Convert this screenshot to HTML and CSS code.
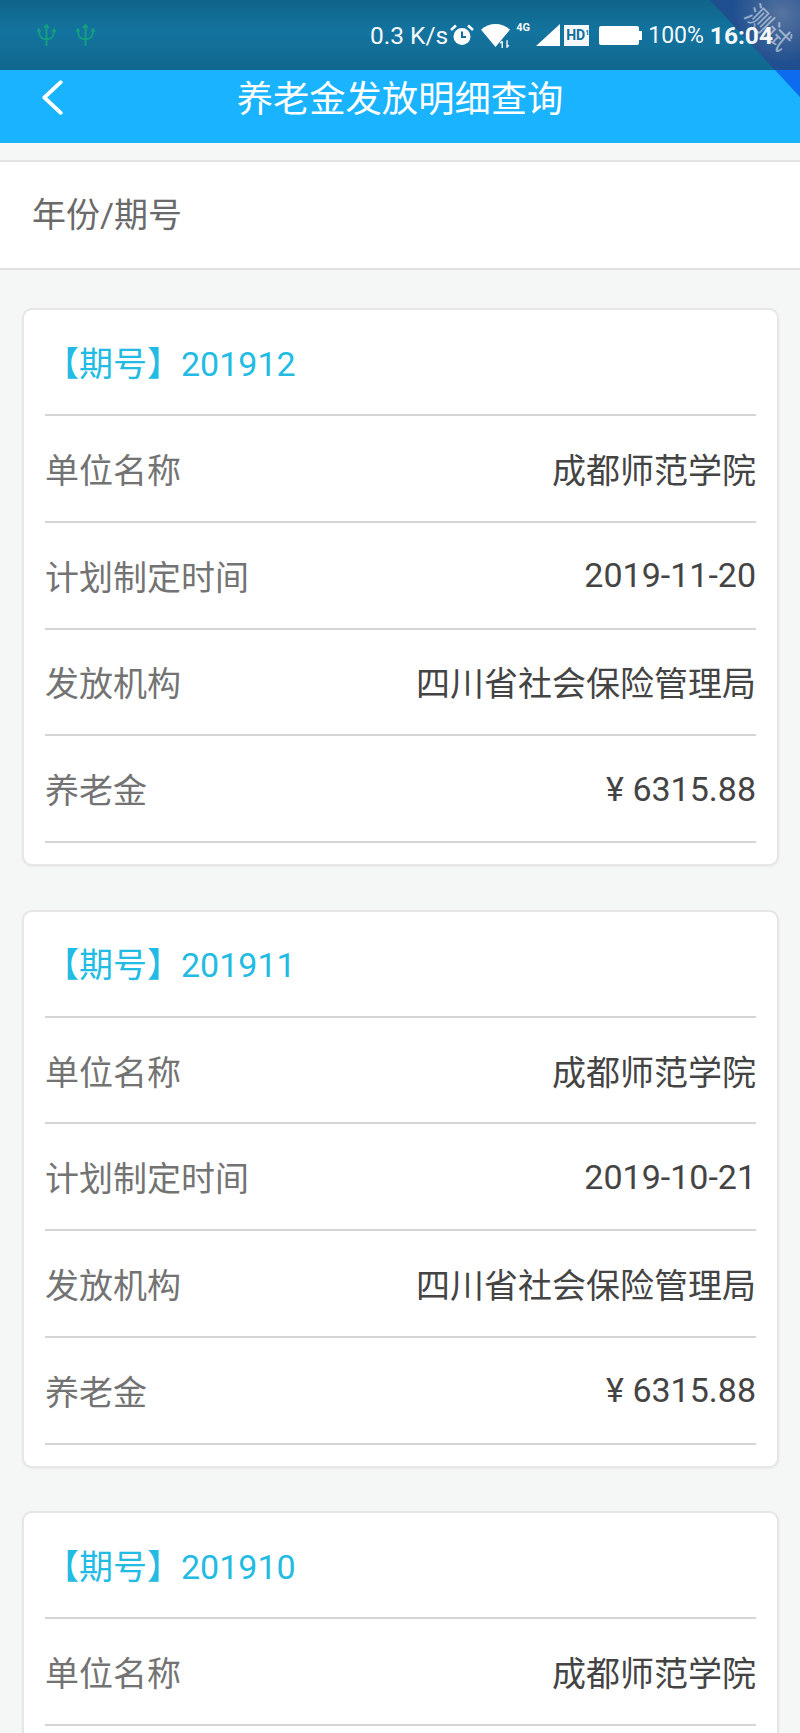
FILE: index.html
```html
<!DOCTYPE html>
<html lang="zh-CN">
<head>
<meta charset="utf-8">
<title>养老金发放明细查询</title>
<link rel="stylesheet" href="styles.css">
</head>
<body>
<div class="page">
  <header class="status">
    <div class="status-left">
      <svg class="trident" viewBox="0 0 20 24"><path d="M10 1v22M7.500 4 10 1l2.500 3M2 6c0 7 2 10 8 10s8-3 8-10M.500 8 2 5.500 3.500 8M16.500 8 18 5.500 19.500 8"/></svg>
      <svg class="trident" viewBox="0 0 20 24"><path d="M10 1v22M7.500 4 10 1l2.500 3M2 6c0 7 2 10 8 10s8-3 8-10M.500 8 2 5.500 3.500 8M16.500 8 18 5.500 19.500 8"/></svg>
    </div>
    <div class="status-right">
      <span class="speed">0.3 K/s</span>
      <svg class="ic-alarm" viewBox="0 0 24 24"><circle cx="12" cy="13.500" r="8.500" fill="#fff"/><path d="M12 8.500v5.500h4" fill="none" stroke="#136f9b" stroke-width="2"/><path d="M1 7 6 2.500M23 7l-5-4.500" fill="none" stroke="#fff" stroke-width="2.500"/></svg>
      <svg class="ic-wifi" viewBox="0 0 30 26"><path d="M0 7C8-1 22-1 30 7L15 25z" fill="#fff"/><path d="M22 19v7M20 21l2-2M27 18v7l2-2" fill="none" stroke="#fff" stroke-width="1.400"/></svg>
      <span class="net">4G</span>
      <svg class="ic-signal" viewBox="0 0 24 24"><path d="M24 1v22H0z" fill="#fff"/></svg>
      <span class="hd">HD<sup>1</sup></span>
      <span class="battery"></span>
      <span class="percent">100%</span>
      <span class="clock">16:04</span>
    </div>
  </header>
  <nav class="nav">
    <svg class="back" viewBox="0 0 20 32"><path d="M18 2 3 16l15 14"/></svg>
    <h1 class="nav-title">养老金发放明细查询</h1>
  </nav>
  <section class="filter">年份/期号</section>
  <main class="list">
    <article class="card">
      <div class="period">【期号】201912</div>
      <div class="row"><span class="label">单位名称</span><span class="value">成都师范学院</span></div>
      <div class="row"><span class="label">计划制定时间</span><span class="value">2019-11-20</span></div>
      <div class="row"><span class="label">发放机构</span><span class="value">四川省社会保险管理局</span></div>
      <div class="row"><span class="label">养老金</span><span class="value">¥ 6315.88</span></div>
    </article>
    <article class="card">
      <div class="period">【期号】201911</div>
      <div class="row"><span class="label">单位名称</span><span class="value">成都师范学院</span></div>
      <div class="row"><span class="label">计划制定时间</span><span class="value">2019-10-21</span></div>
      <div class="row"><span class="label">发放机构</span><span class="value">四川省社会保险管理局</span></div>
      <div class="row"><span class="label">养老金</span><span class="value">¥ 6315.88</span></div>
    </article>
    <article class="card">
      <div class="period">【期号】201910</div>
      <div class="row"><span class="label">单位名称</span><span class="value">成都师范学院</span></div>
    </article>
  </main>
  <div class="ribbon"></div>
  <div class="ribbon-text">测试</div>
</div>
</body>
</html>
```
FILE: styles.css
```css
* { box-sizing: border-box; }
html, body { margin: 0; padding: 0; }
body {
  width: 800px;
  height: 1733px;
  overflow: hidden;
  background: #f5f6f6;
  font-family: Roboto, "Noto Sans CJK SC", sans-serif;
}
.page { position: relative; width: 800px; height: 1733px; overflow: hidden; }

.status {
  height: 70px;
  display: flex;
  justify-content: space-between;
  align-items: center;
  padding: 0 27px 0 37px;
  color: #f4f8fa;
  background: linear-gradient(#0f6489, #13749f 45%, #10688f);
}
.status-left { display: flex; gap: 20px; align-items: center; }
.trident { width: 19px; height: 23px; fill: none; stroke: #13a07f; stroke-width: 2; }
.status-right { position: relative; z-index: 2; display: flex; align-items: center; }
.speed { font-size: 24.500px; margin-right: 2px; }
.ic-alarm { width: 24px; height: 24px; margin-right: 7px; }
.ic-wifi { width: 29px; height: 25px; margin-right: 6px; }
.net { font-size: 11px; font-weight: 700; width: 16px; margin: -16px 4px 0 0; }
.ic-signal { width: 24px; height: 24px; margin-right: 4px; }
.hd {
  width: 25px;
  height: 21px;
  background: #f4f8fa;
  color: #136f9b;
  font-size: 14px;
  font-weight: 700;
  line-height: 21px;
  padding-left: 2px;
  margin-right: 10px;
  overflow: hidden;
}
.hd sup { font-size: 7px; line-height: 0; vertical-align: 5px; }
.battery {
  position: relative;
  width: 40px;
  height: 19px;
  background: #fff;
  border-radius: 2px;
  margin-right: 9px;
}
.battery::after {
  content: "";
  position: absolute;
  top: 5px;
  right: -3px;
  width: 3px;
  height: 9px;
  background: #fff;
}
.percent { font-size: 23px; margin-right: 6px; }
.clock { font-size: 24.500px; font-weight: 700; }

.nav {
  height: 73px;
  position: relative;
  display: flex;
  justify-content: center;
  background: #19b3ff;
  color: #fff;
}
.back {
  position: absolute;
  left: 41px;
  top: 10px;
  width: 22px;
  height: 35px;
  fill: none;
  stroke: #fff;
  stroke-width: 3.500;
  stroke-linecap: round;
  stroke-linejoin: round;
}
.nav-title {
  margin: 0;
  font-size: 36.300px;
  font-weight: 400;
  line-height: 59px;
}

.filter {
  margin-top: 17px;
  height: 110px;
  display: flex;
  align-items: center;
  padding: 0 0 6px 32px;
  background: #fff;
  border-top: 2px solid #e2e2e2;
  border-bottom: 2px solid #e2e2e2;
  color: #6a6a6a;
  font-size: 34px;
}

.list {
  display: flex;
  flex-direction: column;
  gap: 43.500px;
  padding: 38px 21px 0 22px;
}
.card {
  flex: none;
  padding: 0 21px 21px;
  background: #fff;
  border: 2px solid #e6e6e6;
  border-radius: 10px;
  box-shadow: 0 1px 3px rgba(0, 0, 0, .05);
}
.period {
  height: 106px;
  display: flex;
  align-items: center;
  padding-bottom: 2px;
  border-bottom: 2px solid #d5d5d5;
  color: #22bbe3;
  font-size: 34px;
}
.row {
  height: 106.800px;
  display: flex;
  justify-content: space-between;
  align-items: center;
  border-bottom: 2px solid #d5d5d5;
  font-size: 34px;
}
.label { color: #737373; }
.value { color: #444; }

.ribbon {
  position: absolute;
  z-index: 1;
  top: 0;
  right: 0;
  width: 90px;
  height: 97px;
  clip-path: polygon(0 0, 100% 0, 100% 100%);
  background:
    radial-gradient(circle at 80% 15%, rgba(150, 160, 180, .45), transparent 45%),
    linear-gradient(#204f8f 70px, #0b6cf0 70px);
}
.ribbon-text {
  position: absolute;
  z-index: 2;
  top: 14px;
  left: 742px;
  font-size: 26px;
  line-height: 28px;
  color: rgba(255, 255, 255, .5);
  transform: rotate(45deg);
}
```
